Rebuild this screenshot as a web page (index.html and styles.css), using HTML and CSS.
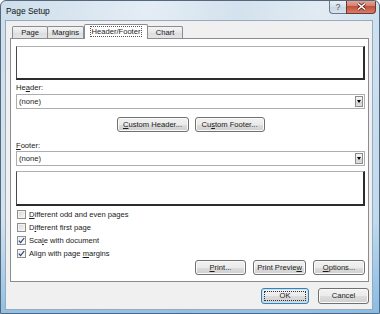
FILE: index.html
```html
<!DOCTYPE html>
<html lang="en">

<head>
    <meta charset="UTF-8">
    <meta name="viewport" content="width=device-width, initial-scale=1.0">
    <title>Page Setup</title>
    <link rel="stylesheet" href="styles.css">
</head>

<body>
    <div class="window">
        <div class="titlebar">
            <span class="title">Page Setup</span>
            <div class="caption">
                <div class="cap-btn help">?</div>
                <div class="cap-btn close">
                    <svg width="11" height="9" viewBox="0 0 11 9">
                        <path d="M2 1.5 L9 7.5 M9 1.5 L2 7.5" stroke="#5a2a22" stroke-width="3" />
                        <path d="M2 1.5 L9 7.5 M9 1.5 L2 7.5" stroke="#ffffff" stroke-width="1.6" />
                    </svg>
                </div>
            </div>
        </div>

        <div class="client">
            <div class="tabs">
                <div class="tab tab-page">Page</div>
                <div class="tab tab-margins">Margins</div>
                <div class="tab tab-hf selected"><span class="focus">Header/Footer</span></div>
                <div class="tab tab-chart">Chart</div>
            </div>

            <div class="panel">
                <div class="preview header-preview"></div>

                <div class="field-label">He<u>a</u>der:</div>
                <div class="select">
                    <span class="select-text">(none)</span>
                    <span class="drop"><span class="arrow"></span></span>
                </div>

                <div class="custom-row">
                    <div class="btn btn-custom-header"><u>C</u>ustom Header...</div>
                    <div class="btn btn-custom-footer">Cu<u>s</u>tom Footer...</div>
                </div>

                <div class="field-label footer-label"><u>F</u>ooter:</div>
                <div class="select">
                    <span class="select-text">(none)</span>
                    <span class="drop"><span class="arrow"></span></span>
                </div>

                <div class="preview footer-preview"></div>

                <div class="checks">
                    <div class="check-row">
                        <span class="checkbox"></span>
                        <span><u>D</u>ifferent odd and even pages</span>
                    </div>
                    <div class="check-row">
                        <span class="checkbox"></span>
                        <span>D<u>i</u>fferent first page</span>
                    </div>
                    <div class="check-row">
                        <span class="checkbox checked">
                            <svg width="7" height="7" viewBox="0 0 7 7">
                                <path d="M0.8 3.6 L2.6 5.6 L6.2 1" fill="none" stroke="#2a3f74" stroke-width="1.2" />
                            </svg>
                        </span>
                        <span>Sca<u>l</u>e with document</span>
                    </div>
                    <div class="check-row">
                        <span class="checkbox checked">
                            <svg width="7" height="7" viewBox="0 0 7 7">
                                <path d="M0.8 3.6 L2.6 5.6 L6.2 1" fill="none" stroke="#2a3f74" stroke-width="1.2" />
                            </svg>
                        </span>
                        <span>Align with page <u>m</u>argins</span>
                    </div>
                </div>

                <div class="print-row">
                    <div class="btn btn-print"><u>P</u>rint...</div>
                    <div class="btn btn-preview">Print Previe<u>w</u></div>
                    <div class="btn btn-options"><u>O</u>ptions...</div>
                </div>
            </div>

            <div class="dialog-buttons">
                <div class="btn btn-ok default">OK</div>
                <div class="btn btn-cancel">Cancel</div>
            </div>
        </div>
    </div>
</body>

</html>
```

FILE: styles.css
```css
body {
    margin: 0;
    font-family: "Liberation Sans", Arial, sans-serif;
    font-size: 7.6px;
    color: #1a1a1a;
}

u {
    text-decoration-thickness: 1px;
    text-underline-offset: 1px;
}

/* window frame */
.window {
    width: 380px;
    height: 314px;
    box-sizing: border-box;
    border: 1px solid #55677a;
    border-radius: 6px 6px 0 0;
    background:
        linear-gradient(to bottom, rgba(140, 190, 230, 0) 70%, rgba(120, 180, 228, 0.75) 100%),
        linear-gradient(100deg, #cddeec 0%, #e4edf5 35%, #d3e2ee 55%, #e2ebf3 75%, #b9d6ec 100%);
    display: flex;
    flex-direction: column;
    overflow: hidden;
}

.titlebar {
    height: 19px;
    display: flex;
    align-items: flex-start;
    padding: 0 3px 0 5px;
}

.title {
    margin-top: 5px;
    font-size: 8.4px;
    line-height: 11px;
    color: #111;
}

.caption {
    margin-left: auto;
    margin-top: -1px;
    display: flex;
}

.cap-btn {
    height: 14px;
    box-sizing: border-box;
    border: 1px solid #6a7888;
    border-top: none;
    display: flex;
    align-items: center;
    justify-content: center;
}

.help {
    width: 17px;
    border-right: none;
    border-radius: 0 0 0 4px;
    background: linear-gradient(#eef3f8, #d6e1eb 50%, #c6d5e3 51%, #d9e5ef);
    color: #4b5663;
    font-size: 9px;
    line-height: 12px;
}

.close {
    width: 30px;
    border-color: #6b3931;
    border-radius: 0 0 4px 0;
    background: linear-gradient(#e6aca1, #d4816f 45%, #c2503c 50%, #d77b66);
}

/* client area */
.client {
    height: 290px;
    margin: 0 6px 0 4px;
    box-sizing: border-box;
    border: 1px solid #98a9bb;
    background: #f0f0f0;
    display: flex;
    flex-direction: column;
}

.tabs {
    height: 14px;
    margin-top: 3px;
    padding-left: 6px;
    display: flex;
    align-items: flex-end;
}

.tab {
    height: 12px;
    box-sizing: border-box;
    border: 1px solid #898c95;
    border-bottom: none;
    border-radius: 2px 2px 0 0;
    background: linear-gradient(#f4f4f4, #e6e6e6 50%, #dcdcdc 51%, #e5e5e5);
    display: flex;
    align-items: center;
    justify-content: center;
    line-height: 10px;
}

.tab-page {
    width: 36px;
}

.tab-margins {
    width: 37px;
    margin-left: -1px;
}

.tab-hf {
    width: 64px;
}

.tab-chart {
    width: 36px;
    margin-left: -1px;
}

.tab.selected {
    height: 15px;
    margin-bottom: -1px;
    background: #fff;
    position: relative;
    z-index: 1;
    padding-bottom: 2px;
}

.focus {
    padding: 0 1px;
    outline: 1px dotted #555;
    line-height: 9px;
}

.panel {
    height: 244px;
    margin: 0 3px 0 4px;
    box-sizing: border-box;
    border: 1px solid #898c95;
    background: #fff;
    padding: 7px 3px 0 5px;
    display: flex;
    flex-direction: column;
}

.preview {
    box-sizing: border-box;
    background: #fff;
    border-top: 1px solid #b0b0b0;
    border-left: 1px solid #4a4a4a;
    border-right: 2px solid #2c2c2c;
    border-bottom: 2px solid #2c2c2c;
}

.header-preview {
    height: 34px;
}

.footer-preview {
    height: 35px;
    margin-top: 5px;
}

.field-label {
    margin-top: 2px;
    line-height: 11px;
    height: 11px;
}

.footer-label {
    margin-top: 8px;
}

.select {
    height: 15px;
    margin-top: 1px;
    box-sizing: border-box;
    border: 1px solid #abadb3;
    background: #fff;
    display: flex;
    align-items: center;
}

.footer-label+.select {
    margin-top: 0;
}

.select-text {
    padding-left: 2px;
    line-height: 11px;
}

.drop {
    margin-left: auto;
    margin-right: 1px;
    width: 8px;
    height: 11px;
    box-sizing: border-box;
    border: 1px solid #8c8c8c;
    background: linear-gradient(#f6f6f6, #e4e4e4 50%, #d4d4d4 51%, #dedede);
    display: flex;
    align-items: center;
    justify-content: center;
}

.arrow {
    width: 0;
    height: 0;
    border-left: 2.5px solid transparent;
    border-right: 2.5px solid transparent;
    border-top: 3px solid #000;
}

.btn {
    height: 15px;
    box-sizing: border-box;
    border: 1px solid #707070;
    border-radius: 3px;
    background: linear-gradient(#f2f2f2, #ebebeb 50%, #dddddd 51%, #cfcfcf);
    box-shadow: inset 0 0 0 1px #fafafa;
    display: flex;
    align-items: center;
    justify-content: center;
    line-height: 10px;
    white-space: nowrap;
}

.custom-row {
    margin-top: 8px;
    display: flex;
    justify-content: center;
    gap: 6px;
}

.btn-custom-header {
    width: 72px;
}

.btn-custom-footer {
    width: 70px;
}

.checks {
    margin-top: 2px;
    display: flex;
    flex-direction: column;
}

.check-row {
    height: 13px;
    display: flex;
    align-items: center;
    gap: 3px;
    padding-left: 1px;
    line-height: 10px;
}

.checkbox {
    width: 9px;
    height: 9px;
    box-sizing: border-box;
    border: 1px solid #8e8f8f;
    background: linear-gradient(135deg, #d6d6d6, #f8f8f8);
    box-shadow: inset 0 0 0 1px #f4f4f4;
    display: flex;
    align-items: center;
    justify-content: center;
}

.checkbox.checked {
    background: linear-gradient(135deg, #e8e8e8, #fdfdfd);
}

.print-row {
    display: flex;
    justify-content: flex-end;
    gap: 7px;
}

.btn-print {
    width: 51px;
}

.btn-preview {
    width: 53px;
}

.btn-options {
    width: 52px;
}

.dialog-buttons {
    margin-top: 6px;
    padding-right: 3px;
    display: flex;
    justify-content: flex-end;
    gap: 9px;
}

.dialog-buttons .btn {
    height: 16px;
}

.btn-ok {
    width: 48px;
}

.btn-cancel {
    width: 51px;
}

.btn.default {
    border-color: #3c7fb1;
    box-shadow: inset 0 0 0 1px #bfe3f7;
    outline: 1px dotted #333;
    outline-offset: -4px;
}
```
